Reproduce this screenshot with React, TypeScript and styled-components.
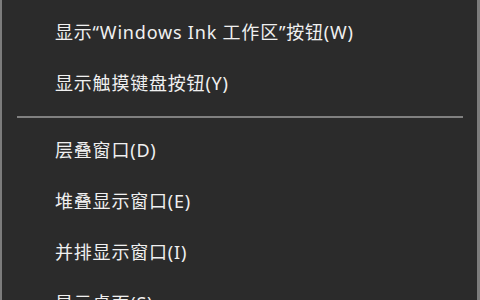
import React from "react";
import styled, { createGlobalStyle } from "styled-components";

const GlobalStyle = createGlobalStyle`
  html, body {
    margin: 0;
    padding: 0;
    background: #2b2b2b;
    overflow: hidden;
  }
`;

const Menu = styled.div`
  box-sizing: border-box;
  width: 480px;
  height: 300px;
  overflow: hidden;
  padding-top: 5px;
  background: #2b2b2b;
  border-left: 2px solid #7c7c7c;
  border-right: 3px solid #7c7c7c;
  font-family: "Noto Sans", "Noto Sans CJK SC", sans-serif;
`;

const Item = styled.div`
  display: flex;
  align-items: center;
  height: 51px;
  padding-left: 53px;
  color: #f0f0f0;
  font-size: 18px;
  letter-spacing: 0.8px;
  white-space: nowrap;
`;

const Separator = styled.div`
  height: 2px;
  margin: 9px 14px 5px 15px;
  background: #808080;
`;

const topItems = ["显示“Windows Ink 工作区”按钮(W)", "显示触摸键盘按钮(Y)"];
const windowItems = ["层叠窗口(D)", "堆叠显示窗口(E)", "并排显示窗口(I)", "显示桌面(S)"];

const App = () => {
  return (
    <>
      <GlobalStyle />
      <Menu>
        {topItems.map((label) => (
          <Item key={label}>{label}</Item>
        ))}
        <Separator />
        {windowItems.map((label) => (
          <Item key={label}>{label}</Item>
        ))}
      </Menu>
    </>
  );
};

export default App;
